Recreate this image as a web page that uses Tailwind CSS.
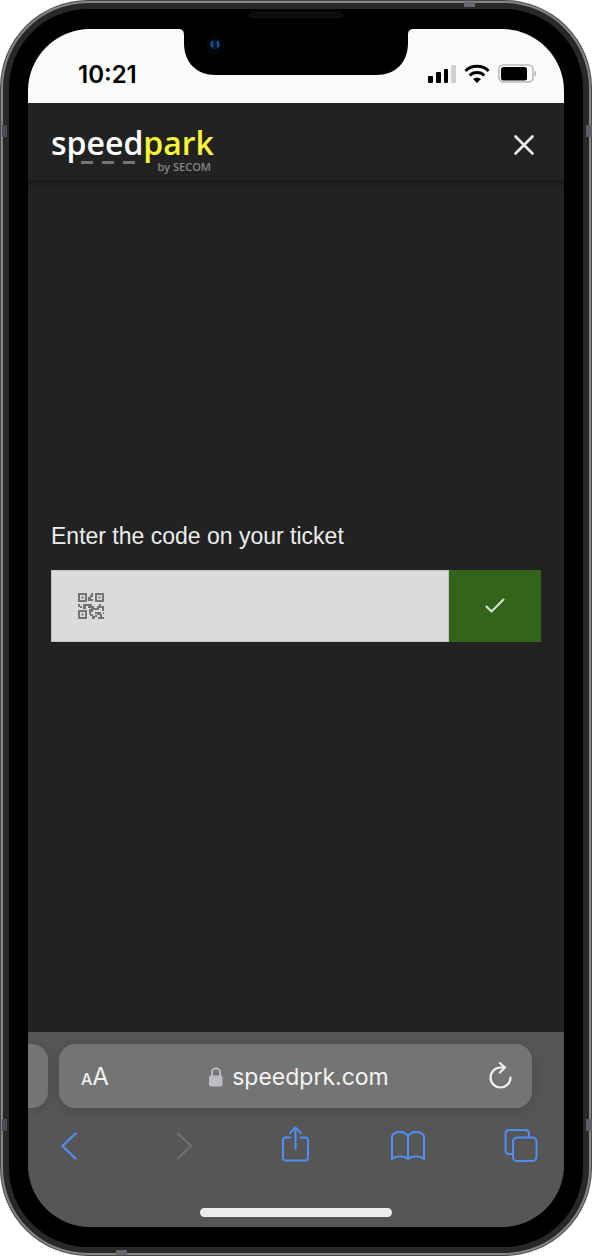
<!DOCTYPE html>
<html lang="en">
<head>
<meta charset="utf-8">
<meta name="viewport" content="width=device-width, initial-scale=1">
<title>speedpark</title>
<script src="https://cdn.jsdelivr.net/npm/@tailwindcss/browser@4"></script>
</head>
<body class="bg-white">
<div class="relative flex min-h-screen flex-col overflow-hidden rounded-[88px] bg-[#48484a] p-px">
  <!-- phone frame -->
  <div class="flex flex-1 flex-col rounded-[87px] bg-[#858585] p-[2px]">
    <div class="flex flex-1 flex-col rounded-[85px] bg-[#272829] p-[6px]">
      <div class="flex flex-1 flex-col rounded-[79px] bg-black px-[19px] py-5">
        <div class="flex flex-1 flex-col overflow-hidden rounded-[62px] bg-[#222222]">

          <div class="relative flex h-[74px] shrink-0 items-end justify-between bg-[#fafafa] pr-[26px] pb-3 pl-[50px]">
            <span class="font-['Inter',sans-serif] text-2xl leading-8 font-semibold text-black">10:21</span>
            <svg class="absolute top-0 left-1/2 h-[46px] w-[236px] -translate-x-1/2" viewBox="0 0 236 46" aria-hidden="true"><path d="M0 0C5 0 6 2 6 7V14C6 33 18 46 38 46H198C218 46 230 33 230 14V7C230 2 231 0 236 0Z"/></svg>
            <svg class="mb-[7px] h-5 w-[110px]" viewBox="0 0 110 20" role="img" aria-label="Signal, Wi-Fi, battery">
              <rect x="0" y="12" width="5" height="7" rx="1"/><rect x="8" y="8" width="5" height="11" rx="1"/><rect x="16" y="5" width="4" height="14" rx="1"/><rect x="23" y="1" width="5" height="18" rx="1" fill="#cfcfcf"/>
              <g fill="none" stroke="#000" stroke-width="3"><path d="M37.500 7C43.500 .8 54.500 .8 60.500 7"/><path d="M41.700 11.500C45.500 7.600 52.500 7.600 56.300 11.500"/></g>
              <path d="M45 15Q49 12 53 15L49 19Z"/>
              <rect x="71" y="1" width="34" height="17" rx="4.500" fill="#fff" stroke="#b9b9b9" stroke-width="1.600"/><rect x="73" y="3" width="26" height="13.500" rx="2.500"/><path d="M106.700 6.500Q110 9.500 106.700 12.500Z" fill="#aaa"/>
            </svg>
          </div>

          <header class="flex h-[78px] shrink-0 items-start justify-between border-b border-[#1b1b1b] pr-7 pl-[23px] shadow-[0_2px_6px_rgba(0,0,0,0.3)]">
            <a href="#" class="mt-6 block font-['Open_Sans','Noto_Sans',sans-serif] text-white">
              <span class="block text-[32px] leading-8 font-semibold">speed<span class="text-[#f9f63c]">park</span></span>
              <span class="flex items-start justify-between pr-[3px] pl-[30px]">
                <span class="flex gap-[9px] pt-[2px]"><i class="h-[3px] w-3 bg-[#737373]"></i><i class="h-[3px] w-3 bg-[#737373]"></i><i class="h-[3px] w-3 bg-[#737373]"></i></span>
                <span class="text-[11px] leading-4 font-semibold text-[#858585]">by SECOM</span>
              </span>
            </a>
            <button type="button" aria-label="Close" class="mt-[30px] block"><svg class="h-6 w-6" viewBox="0 0 24 24" fill="none" stroke="#eee" stroke-width="2.600" stroke-linecap="round"><path d="M3.500 3.500L20.500 20.500M20.500 3.500L3.500 20.500"/></svg></button>
          </header>

          <main class="flex flex-1 flex-col justify-center px-[23px] pb-[51px]">
            <form onsubmit="return false">
              <label for="code" class="block pb-[18px] font-['Liberation_Sans',Arial,sans-serif] text-[23px] leading-8 text-[#ededed]">Enter the code on your ticket</label>
              <div class="relative flex h-[72px]">
                <input id="code" type="text" class="min-w-0 flex-1 border border-[#c2c2c2] bg-[#dbdbdb] pr-4 pl-[66px] text-xl text-[#222] outline-none">
                <svg class="pointer-events-none absolute top-[22px] left-[26px] h-7 w-7" viewBox="0 0 28 28" fill="#747474" aria-hidden="true">
                  <path fill-rule="evenodd" d="M1 1H10V10H1ZM3 3V8H8V3ZM18 1H27V10H18ZM20 3V8H25V3ZM1 18H10V27H1ZM3 20V25H8V20Z"/>
                  <path d="M4.500 4.500H6.500V6.500H4.500ZM21.500 4.500H23.500V6.500H21.500ZM4.500 21.500H6.500V23.500H4.500ZM14 1H16V5H14V7H16V9H11V5H13V3H14ZM1 12H3V14H5V16H3V15H1ZM6 12H15V14H17V16H20V14H22V12H24V14H27V19H25V16H22V18H16V20H14V16H11V14H9V17H6ZM12 17H14V22H16V24H18V27H15V24H13V22H12ZM18 20H24V22H26V20H27V22H25V25H27V27H21V25H23V23H20V25H18V23H20V22H18Z"/>
                </svg>
                <button type="submit" aria-label="Confirm code" class="flex w-[92px] items-center justify-center bg-[#32651a]"><svg class="h-5 w-5" viewBox="0 0 20 20" fill="none" stroke="#d7e2d2" stroke-width="2.200"><path d="M1 10L6.500 15.500L19 3"/></svg></button>
              </div>
            </form>
          </main>

          <footer class="flex h-[195px] shrink-0 flex-col bg-[#565656] pt-3 font-['Inter',sans-serif]">
            <div class="flex gap-[11px] pr-8">
              <div class="h-16 w-5 rounded-r-2xl bg-[#747474] shadow-[0_2px_10px_rgba(0,0,0,0.15)]"></div>
              <div class="flex h-16 flex-1 items-center justify-between rounded-2xl bg-[#747474] pt-[2px] pr-[18px] pl-[22px] text-[#f3f3f3] shadow-[0_3px_14px_rgba(0,0,0,0.15)]">
                <button type="button" aria-label="Text size" class="flex items-baseline"><span class="text-base font-medium">A</span><span class="text-2xl">A</span></button>
                <a href="#" class="flex items-center gap-2 text-[23px] leading-8"><svg class="h-5 w-4" viewBox="0 0 16 20" aria-hidden="true"><path d="M4 9V5.500C4 0 12 0 12 5.500V9" fill="none" stroke="#bdbcc3" stroke-width="1.900"/><rect x="1" y="8.500" width="13.500" height="11" rx="2" fill="#bdbcc3"/></svg>speedprk.com</a>
                <button type="button" aria-label="Reload"><svg class="h-[30px] w-[26px]" viewBox="0 0 26 30" fill="none" stroke="#f1f1f1" stroke-width="2.200" stroke-linecap="round" stroke-linejoin="round"><path d="M22.500 15.500A10 10 0 1 1 12.500 5.500H16M12 1L17 5.500L12 10.500"/></svg></button>
              </div>
            </div>
            <nav class="flex items-center justify-between pt-[18px] pr-[26px] pl-6" aria-label="Browser">
              <button type="button" aria-label="Back"><svg class="h-10 w-[34px]" viewBox="0 0 34 40" fill="none" stroke="#4f8ff5" stroke-width="2.400" stroke-linecap="round" stroke-linejoin="round"><path d="M23.500 7.500L10.500 20L23.500 32.500"/></svg></button>
              <button type="button" aria-label="Forward" disabled><svg class="h-10 w-[34px]" viewBox="0 0 34 40" fill="none" stroke="#707070" stroke-width="2.200" stroke-linecap="round" stroke-linejoin="round"><path d="M13 7.500L26 20L13 32.500"/></svg></button>
              <button type="button" aria-label="Share"><svg class="h-10 w-[34px]" viewBox="0 0 34 40" fill="none" stroke="#4f8ff5" stroke-width="2" stroke-linecap="round" stroke-linejoin="round"><path d="M12.500 11.500H8Q5 11.500 5 14.500V31.500Q5 34.500 8 34.500H27Q30 34.500 30 31.500V14.500Q30 11.500 27 11.500H22.500M17.500 23V1.500M12 7L17.500 1.500L23 7"/></svg></button>
              <button type="button" aria-label="Bookmarks"><svg class="h-10 w-[34px]" viewBox="0 0 34 40" fill="none" stroke="#4f8ff5" stroke-width="2" stroke-linecap="round" stroke-linejoin="round"><path d="M17 10.500C14 4.500 4 4.500 1 10V33C4 29.500 14 29.500 17 33C20 29.500 30 29.500 33 33V10C30 4.500 20 4.500 17 10.500V32.500"/></svg></button>
              <button type="button" aria-label="Tabs"><svg class="h-10 w-[34px]" viewBox="0 0 34 40" fill="none" stroke="#4f8ff5" stroke-width="2" stroke-linejoin="round"><path d="M9 28H5Q1.500 28 1.500 24.500V8Q1.500 4 5.500 4H21Q25 4 25 8V11.500"/><rect x="9" y="11.500" width="23.500" height="23.500" rx="4"/></svg></button>
            </nav>
            <div class="mx-auto mt-auto mb-[10px] h-[9px] w-48 rounded-full bg-[#eeeeee]"></div>
          </footer>
        </div>
      </div>
    </div>
  </div>

  <!-- antenna bands, speaker and camera on the frame -->
  <div class="absolute top-[125px] left-[2px] h-3 w-[5px] bg-[#4b4b50]"></div>
  <div class="absolute top-[125px] right-0 h-3 w-[6px] bg-[#5c5c61]"></div>
  <div class="absolute bottom-[125px] left-[2px] h-3 w-[5px] bg-[#4b4b50]"></div>
  <div class="absolute right-0 bottom-[125px] h-3 w-[6px] bg-[#5c5c61]"></div>
  <div class="absolute top-[2px] right-[117px] h-[5px] w-[11px] bg-[#66666b]"></div>
  <div class="absolute bottom-[1px] left-[116px] h-[5px] w-[11px] bg-[#66666b]"></div>
  <div class="absolute top-3 left-1/2 h-[6px] w-[94px] -translate-x-1/2 rounded-full border border-[#151515] bg-[#0c0c0c]"></div>
  <svg class="absolute top-[35px] left-[205px] h-5 w-5" viewBox="0 0 20 20" aria-hidden="true"><circle cx="10" cy="10" r="9" fill="#040405" stroke="#0b0b0b" /><circle cx="10" cy="9.500" r="5.500" fill="#03172f"/><path d="M8 6.500Q5 9.500 8 12M12 6.500Q15 9.500 12 12" fill="none" stroke="#1d5b9c" stroke-width="2"/></svg>
</div>
</body>
</html>
